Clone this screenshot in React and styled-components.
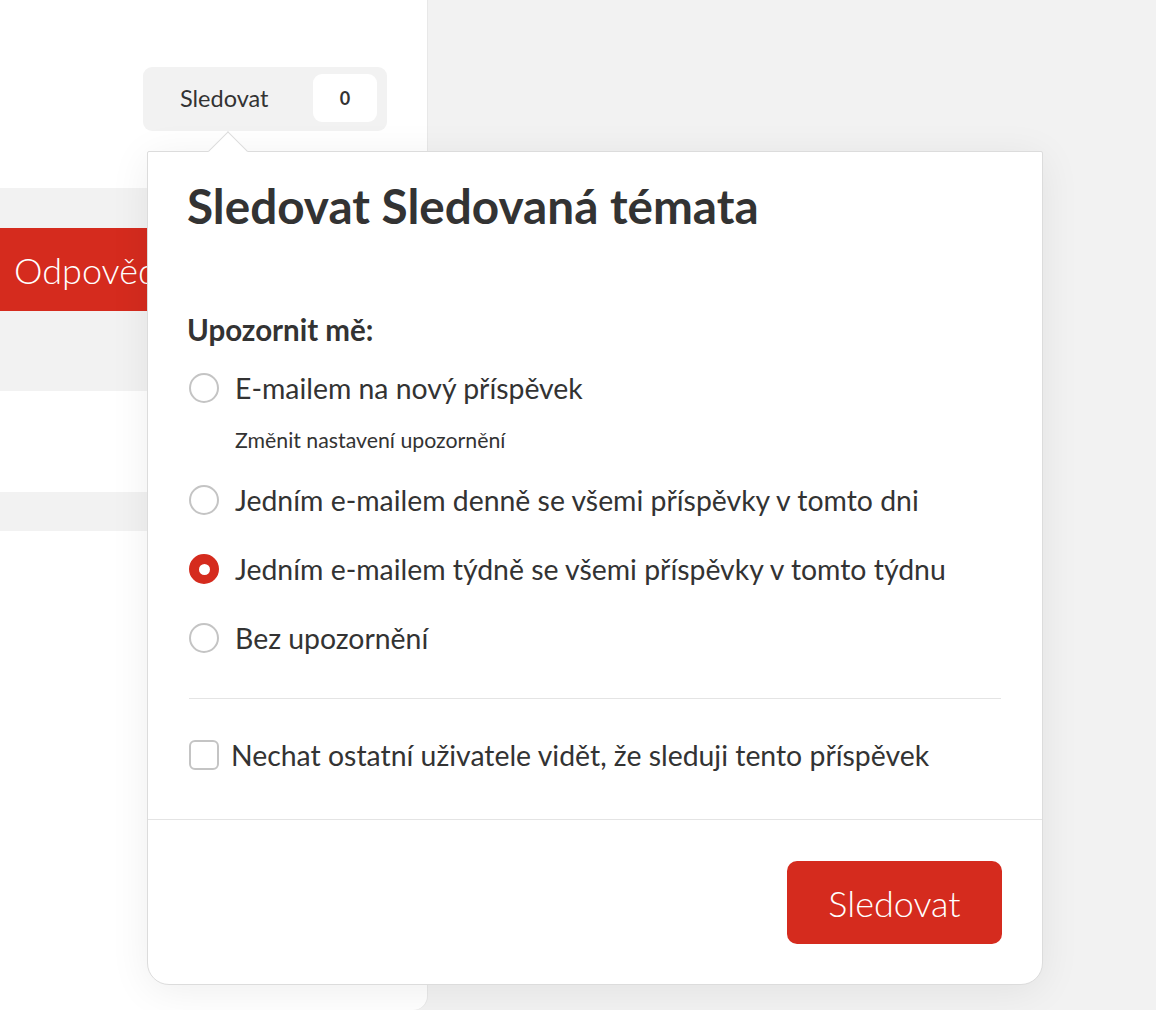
import React from "react";
import styled, { createGlobalStyle } from "styled-components";

const red = "#d52b1e";
const text = "#333333";
const font = `"Lato", "Open Sans", sans-serif`;

const GlobalStyle = createGlobalStyle`
  html, body {
    margin: 0;
    padding: 0;
    background: #f2f2f2;
    font-family: ${font};
    color: ${text};
  }
  * { box-sizing: border-box; }
`;

const Page = styled.div`
  display: grid;
  grid-template-columns: 427px 1fr;
  height: 1010px;
  overflow: hidden;
  background: #f2f2f2;
`;

const LeftPanel = styled.div`
  display: flex;
  flex-direction: column;
  background: white;
  border-radius: 0 0 14px 0;
  height: 1010px;
  box-shadow: 1px 0 0 #e8e8e8;
`;

const TopArea = styled.div`
  height: 188px;
  padding: 67px 0 0 143px;
`;

const Band = styled.div`
  height: ${props => props.h}px;
  background: ${props => (props.gray ? "#f2f2f2" : "white")};
  display: flex;
  align-items: center;
`;

const ReplyButton = styled.button`
  height: 100%;
  width: 230px;
  border: none;
  background: ${red};
  color: white;
  font-family: ${font};
  font-weight: 300;
  font-size: 36px;
  text-align: left;
  padding: 0 0 0 14px;
`;

const TriggerWrap = styled.div`
  position: relative;
  width: 244px;
`;

const Trigger = styled.div`
  display: flex;
  align-items: center;
  justify-content: space-between;
  height: 64px;
  padding: 0 10px 2px 37px;
  background: #f2f2f2;
  border-radius: 9px;
  font-size: 23.5px;
`;

const Count = styled.span`
  display: flex;
  align-items: center;
  justify-content: center;
  width: 64px;
  height: 48px;
  background: white;
  border-radius: 9px;
  font-weight: 700;
  font-size: 18px;
`;

const Popover = styled.div`
  position: absolute;
  top: 84px;
  left: 4px;
  width: 896px;
  background: white;
  border: 1px solid #dcdcdc;
  border-radius: 2px 2px 22px 22px;
  box-shadow: 0 6px 40px rgba(0, 0, 0, 0.07);
  z-index: 2;
`;

const Arrow = styled.span`
  position: absolute;
  top: -15px;
  left: 66px;
  width: 28px;
  height: 28px;
  background: white;
  border-top: 1px solid #dcdcdc;
  border-left: 1px solid #dcdcdc;
  transform: rotate(45deg);
`;

const Body = styled.div`
  position: relative;
  padding: 26px 41px 44px 39px;
  border-bottom: 1px solid #e4e4e4;
`;

const Title = styled.h2`
  margin: 0;
  font-size: 47.7px;
  line-height: 56px;
  font-weight: 700;
`;

const Label = styled.div`
  margin-top: 78px;
  font-size: 29.5px;
  line-height: 36px;
  font-weight: 700;
`;

const Options = styled.div`
  display: flex;
  flex-direction: column;
  margin-top: 20px;
`;

const OptionRow = styled.label`
  display: flex;
  align-items: center;
  gap: ${props => (props.box ? 12 : 16)}px;
  height: 40px;
  margin-top: ${props => props.mt || 0}px;
  padding-left: 2px;
  font-size: 28.4px;
`;

const Radio = styled.span`
  flex: none;
  width: 30px;
  height: 30px;
  border-radius: 50%;
  border: 2px solid ${props => (props.checked ? red : "#c4c4c4")};
  background: ${props => (props.checked ? red : "white")};
  display: flex;
  align-items: center;
  justify-content: center;
  &::after {
    content: "";
    display: ${props => (props.checked ? "block" : "none")};
    width: 11px;
    height: 11px;
    border-radius: 50%;
    background: white;
  }
`;

const Checkbox = styled.span`
  flex: none;
  width: 30px;
  height: 30px;
  border-radius: 6px;
  border: 2px solid #c4c4c4;
  background: white;
`;

const Hint = styled.div`
  margin: 20px 0 0 48px;
  font-size: 21.3px;
  line-height: 24px;
`;

const Divider = styled.hr`
  margin: 40px 0 36px 2px;
  border: none;
  border-top: 1px solid #e4e4e4;
`;

const Footer = styled.div`
  display: flex;
  justify-content: flex-end;
  padding: 41px 40px 40px;
`;

const SubmitButton = styled.button`
  width: 215px;
  height: 83px;
  border: none;
  border-radius: 10px;
  background: ${red};
  color: white;
  font-family: ${font};
  font-weight: 300;
  font-size: 36px;
`;

const options = [
  { label: "E-mailem na nový příspěvek" },
  { label: "Jedním e-mailem denně se všemi příspěvky v tomto dni", mt: 28 },
  { label: "Jedním e-mailem týdně se všemi příspěvky v tomto týdnu", mt: 29, checked: true },
  { label: "Bez upozornění", mt: 29 }
];

const App = () => {
  return (
    <>
      <GlobalStyle />
      <Page>
        <LeftPanel>
          <TopArea>
            <TriggerWrap>
              <Trigger>
                <span>Sledovat</span>
                <Count>0</Count>
              </Trigger>
              <Popover>
                <Arrow />
                <Body>
                  <Title>Sledovat Sledovaná témata</Title>
                  <Label>Upozornit mě:</Label>
                  <Options>
                    {options.map((o, i) => (
                      <React.Fragment key={o.label}>
                        <OptionRow mt={o.mt}>
                          <Radio checked={o.checked} />
                          {o.label}
                        </OptionRow>
                        {i === 0 && <Hint>Změnit nastavení upozornění</Hint>}
                      </React.Fragment>
                    ))}
                  </Options>
                  <Divider />
                  <OptionRow box>
                    <Checkbox />
                    Nechat ostatní uživatele vidět, že sleduji tento příspěvek
                  </OptionRow>
                </Body>
                <Footer>
                  <SubmitButton>Sledovat</SubmitButton>
                </Footer>
              </Popover>
            </TriggerWrap>
          </TopArea>
          <Band gray h={40} />
          <Band gray h={83}>
            <ReplyButton>Odpovědět</ReplyButton>
          </Band>
          <Band gray h={80} />
          <Band h={101} />
          <Band gray h={39} />
        </LeftPanel>
        <div />
      </Page>
    </>
  );
};

export default App;
